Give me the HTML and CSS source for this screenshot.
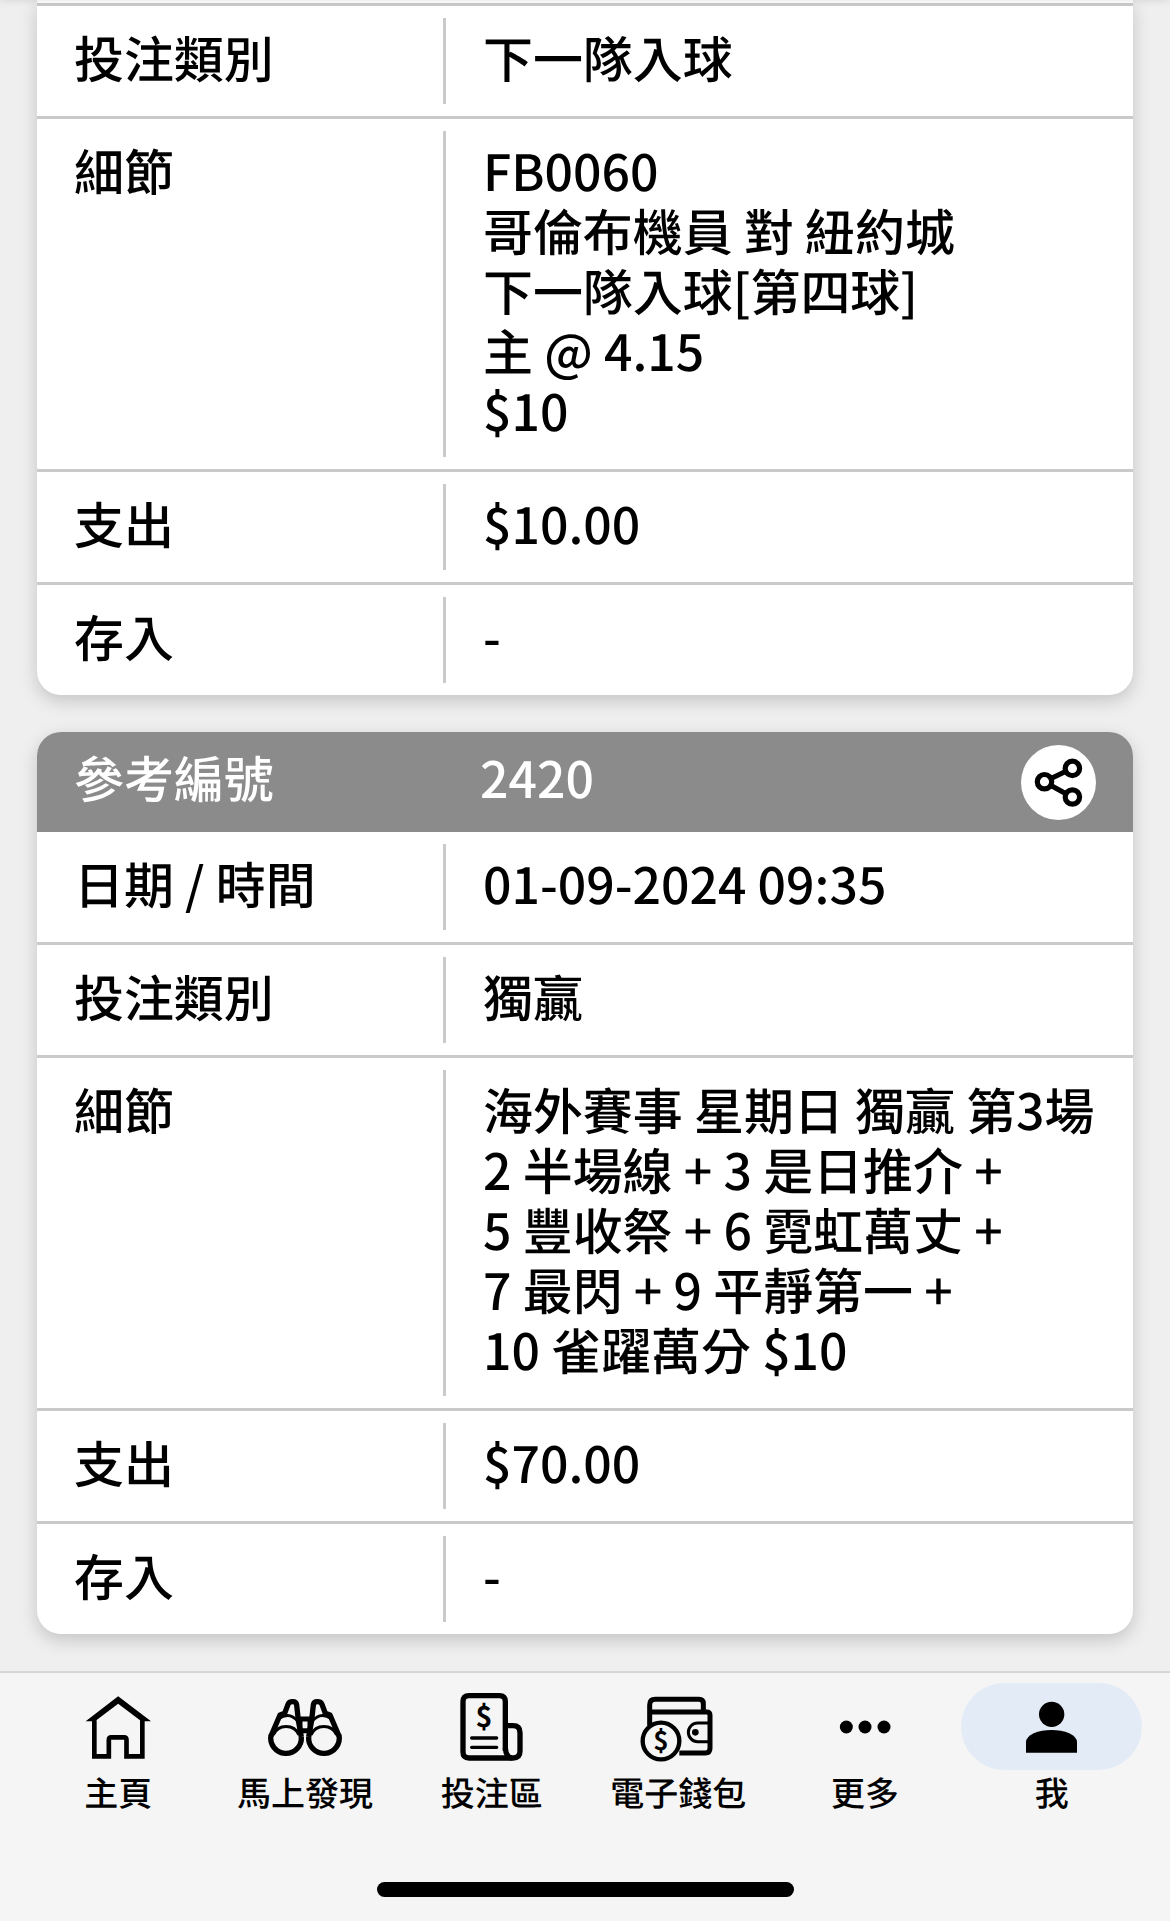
FILE: index.html
```html
<!DOCTYPE html>
<html lang="zh-Hant">
<head>
<meta charset="utf-8">
<title>投注紀錄</title>
<link rel="stylesheet" href="styles.css">
</head>
<body>
<div class="screen">
  <main class="records">
    <section class="card card-continued">
      <dl class="row"><dt>投注類別</dt><dd>下一隊入球</dd></dl>
      <dl class="row"><dt>細節</dt><dd>FB0060<br>哥倫布機員 對 紐約城<br>下一隊入球[第四球]<br>主 @ 4.15<br>$10</dd></dl>
      <dl class="row"><dt>支出</dt><dd>$10.00</dd></dl>
      <dl class="row"><dt>存入</dt><dd>-</dd></dl>
    </section>
    <section class="card">
      <header class="card-head">
        <span class="head-label">參考編號</span>
        <span class="head-value">2420</span>
        <button class="share" aria-label="分享">
          <svg viewBox="0 0 75 75" fill="none" stroke="#000" stroke-width="5.2">
            <path d="M30 33.500 44.500 26.500M30 40.500 44.500 48.500"/>
            <circle cx="23.500" cy="36.700" r="7.200"/><circle cx="51.400" cy="23.400" r="7.200"/><circle cx="51.400" cy="52" r="7.200"/>
          </svg>
        </button>
      </header>
      <dl class="row"><dt>日期 / 時間</dt><dd>01-09-2024 09:35</dd></dl>
      <dl class="row"><dt>投注類別</dt><dd>獨贏</dd></dl>
      <dl class="row"><dt>細節</dt><dd>海外賽事 星期日 獨贏 第3場<br>2 半場線 + 3 是日推介 +<br>5 豐收祭 + 6 霓虹萬丈 +<br>7 最閃 + 9 平靜第一 +<br>10 雀躍萬分 $10</dd></dl>
      <dl class="row"><dt>支出</dt><dd>$70.00</dd></dl>
      <dl class="row"><dt>存入</dt><dd>-</dd></dl>
    </section>
  </main>
  <nav class="tabbar">
    <div class="tabs">
      <a class="tab"><span class="pill">
        <svg class="icon" viewBox="0 0 216 216">
          <path d="M37 88V196H75V196H80.500V147Q80.500 139 88 139H126Q133.500 139 133.500 147V196H181V88" fill="none" stroke="#000" stroke-width="14"/>
          <path d="M11 91 108.500 16 207 91H178L108.500 38 39 91Z"/>
        </svg></span><span>主頁</span></a>
      <a class="tab"><span class="pill">
        <svg class="icon" viewBox="0 0 216 216" fill="none" stroke="#000" stroke-linejoin="round">
          <g id="barrel">
            <path d="M6 135 33 72 47 67 57 40Q60 32 71 32 82 32 83 42L88 88 97 138" stroke-width="16"/>
            <path d="M6 132A46 46 0 1 0 97 138" stroke-width="16"/>
            <path d="M13 132A42 42 0 0 1 90 132" stroke-width="9"/>
            <path d="M30 83Q62 60 88 93" stroke-width="8"/>
          </g>
          <use href="#barrel" transform="matrix(-1 0 0 1 216 0)"/>
          <path d="M86 84H130M86 119H130" stroke-width="15"/>
          <path d="M95 82V126M121 82V126" stroke-width="11"/>
        </svg></span><span>馬上發現</span></a>
      <a class="tab"><span class="pill">
        <svg class="icon" viewBox="4 0 216 216">
          <g fill="none" stroke="#000" stroke-width="16">
            <path d="M152 180V32Q152 14 134 14H43Q25 14 25 32V183Q25 201 43 201H175Q196 201 196 180V125Q196 104 175 104H155"/>
            <path d="M152 170Q154 199 171 201"/>
            <path d="M51 141H126M51 169H126" stroke-width="10" stroke-linecap="round"/>
          </g>
          <text x="88" y="108" font-size="86">$</text>
        </svg></span><span>投注區</span></a>
      <a class="tab"><span class="pill">
        <svg class="icon" viewBox="0 0 216 216">
          <g fill="none" stroke="#000" stroke-width="15">
            <path d="M23 104V42Q23 25 40 25H171Q184 25 184 38V62"/>
            <path d="M26 63H194Q204 63 204 73V172Q204 186 190 186H112"/>
            <path d="M204 96H167A28 28 0 0 0 167 152H204" stroke-width="9"/>
            <circle cx="57" cy="150" r="55" stroke-width="13"/>
          </g>
          <circle cx="160" cy="124" r="10"/>
          <text x="57" y="177" font-size="78">$</text>
        </svg></span><span>電子錢包</span></a>
      <a class="tab"><span class="pill">
        <svg class="icon" viewBox="0 0 216 216"><circle cx="52" cy="108" r="19.500"/><circle cx="108" cy="108" r="19.500"/><circle cx="165" cy="108" r="19.500"/></svg></span><span>更多</span></a>
      <a class="tab active"><span class="pill">
        <svg class="icon" viewBox="2 0 216 216"><circle cx="109" cy="70" r="38"/><path d="M32 185V154Q32 138 55 127 79 117 108.500 117 138 117 162 127 185 138 185 154V185Z"/></svg></span><span>我</span></a>
    </div>
    <div class="home-indicator"></div>
  </nav>
</div>
</body>
</html>
```
FILE: styles.css
```css
* { box-sizing: border-box; }
body {
  margin: 0;
  background: #efefef;
  color: #000;
  font-family: "Noto Sans CJK TC", sans-serif;
  font-weight: 500;
  text-rendering: geometricPrecision;
}
.screen {
  position: relative;
  height: 1921px;
  overflow: hidden;
  display: flex;
  flex-direction: column;
}
/* shadow cast by the bar above the scrolled list */
.screen::before {
  content: "";
  position: absolute;
  inset: -10px 0 auto;
  height: 10px;
  box-shadow: 0 0 8px rgba(0, 0, 0, .12);
  z-index: 1;
}
.records {
  height: 1671px;
  padding: 0 37px;
  display: flex;
  flex-direction: column;
  gap: 37px;
}
.card {
  flex: none;
  border-radius: 24px;
  background: #fff;
  box-shadow: 0 6px 18px rgba(0, 0, 0, .18);
}
.card-continued {
  padding-top: 3px;
  border-radius: 0 0 24px 24px;
}
.row {
  margin: 0;
  display: flex;
  padding: 12px 0;
  border-top: 3px solid #cacaca;
  font-size: 49.950px;
  line-height: 60px;
}
.card-head + .row { border-top: 0; }
.row dt {
  width: 406px;
  padding: 9px 0 17px 37px;
}
.row dd {
  flex: 1;
  margin: 0;
  padding: 9px 0 17px 37px;
  border-left: 3px solid #cacaca;
  white-space: nowrap;
}
.card-head {
  height: 100px;
  display: flex;
  align-items: center;
  padding: 0 37px;
  border-radius: 24px 24px 0 0;
  background: #8b8b8b;
  color: #fff;
  font-size: 49.950px;
  line-height: 60px;
}
.head-label { width: 406px; padding-bottom: 10px; }
.head-value { flex: 1; padding-bottom: 10px; }
.share {
  width: 75px;
  height: 75px;
  margin-left: auto;
  padding: 0;
  border: 0;
  border-radius: 50%;
  background: #fff;
}
.share svg { display: block; }
.tabbar {
  position: relative;
  height: 250px;
  border-top: 2px solid #d6d6d6;
  background: #f5f5f5;
  display: flex;
  flex-direction: column;
  align-items: center;
  justify-content: space-between;
  padding: 10px 25px 24px;
}
.tabs {
  width: 100%;
  display: grid;
  grid-template-columns: repeat(6, 1fr);
}
.tab {
  display: flex;
  flex-direction: column;
  align-items: center;
  font-size: 34px;
  line-height: 44px;
  white-space: nowrap;
}
.pill {
  width: 181px;
  height: 87px;
  display: flex;
  align-items: center;
  justify-content: center;
  border-radius: 44px;
}
.active .pill { background: #e3ecf6; }
.icon {
  width: 72px;
  height: 72px;
  overflow: visible;
}
.icon text {
  font-weight: 700;
  text-anchor: middle;
}
.home-indicator {
  width: 417px;
  height: 15px;
  border-radius: 8px;
  background: #000;
}
```
